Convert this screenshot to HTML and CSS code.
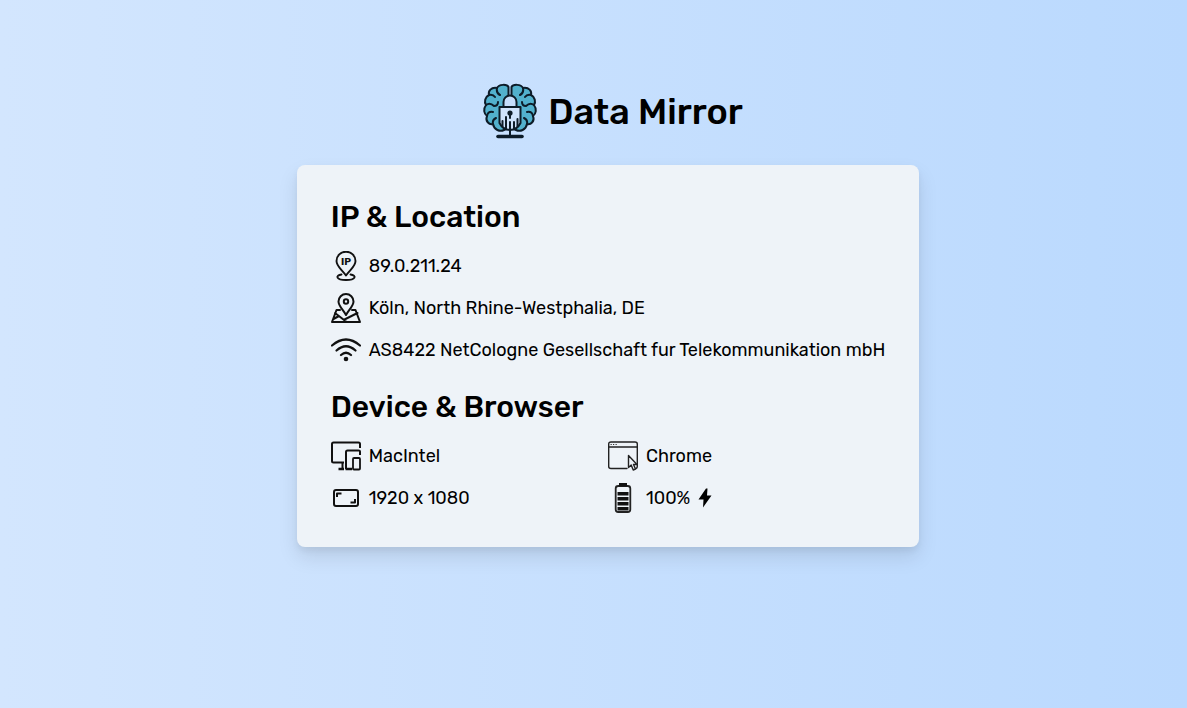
FILE: index.html
```html
<!DOCTYPE html>
<html lang="en">
<head>
<meta charset="utf-8">
<meta name="viewport" content="width=device-width, initial-scale=1">
<title>Data Mirror</title>
<link rel="stylesheet" href="styles.css">
</head>
<body>
<main class="page">
  <header class="brand">
    <svg class="logo" viewBox="0 0 60 60" fill="none" stroke="#0d1c28" stroke-width="2" stroke-linecap="round" stroke-linejoin="round" aria-hidden="true">
      <path fill="#52b1cd" d="M28.500 5C27 2 19 2 17 6C11 5 8 9 9 13C5 15 4 20 6 23C3 27 4 32 7 34C5 39 9 43 13 42C14 48 20 50 24 48L28.500 46Z"/>
      <path fill="#52b1cd" d="M31.500 5C33 2 41 2 43 6C49 5 52 9 51 13C55 15 56 20 54 23C57 27 56 32 53 34C55 39 51 43 47 42C46 48 40 50 36 48L31.500 46Z"/>
      <path d="M17 6q-1 5 3 7M9 13q4-1 6 2M6 23q4-3 8 1q4 0 4-4M7 34q1-5 6-4M13 42q-1-4 3-6M43 6q1 5-3 7M51 13q-4-1-6 2M54 23q-4-3-8 1q-4 0-4-4M53 34q-1-5-6-4M47 42q1-4-3-6"/>
      <path fill="#cfe3fb" d="M19.500 25H40.500V41Q37 48 30 48Q23 48 19.500 41Z"/>
      <path fill="#c6defc" d="M23.500 25V20a6.500 6.500 0 0 1 13 0v5z"/>
      <circle cx="30" cy="31" r="2.600" fill="#0d1c28" stroke="none"/>
      <path d="M30 31v5M22.500 39v5M26 35v12M30 40v13M34 40v7M37.500 37v7"/>
      <path stroke-width="3.600" d="M18 54.500H42"/>
    </svg>
    <h1 class="brand-name">Data Mirror</h1>
  </header>

  <div class="card">
    <section class="group">
      <h2 class="heading">IP &amp; Location</h2>
      <ul class="list">
        <li class="item">
          <svg class="icon" viewBox="0 0 30 30" fill="none" stroke="#111" stroke-width="1.900" stroke-linecap="round" stroke-linejoin="round" aria-hidden="true">
            <path d="M15 24.500C11 18.500 5.500 15.500 5.500 10a9.500 9.300 0 0 1 19 0C24.500 15.500 19 18.500 15 24.500Z"/>
            <path d="M10.500 23.500C4 24.500 5 29 15 29S26 24.500 19.500 23.500"/>
            <text class="pin-text" x="15" y="13.500" text-anchor="middle">IP</text>
          </svg>
          <span>89.0.211.24</span>
        </li>
        <li class="item">
          <svg class="icon" viewBox="0 0 30 30" fill="none" stroke="#111" stroke-width="2" stroke-linecap="round" stroke-linejoin="round" aria-hidden="true">
            <path d="M15 22C12 16.500 7.500 13 7.500 8.500a7.500 7.500 0 0 1 15 0C22.500 13 18 16.500 15 22Z"/>
            <circle cx="15" cy="8.500" r="2.200"/>
            <path d="M9 17H5.500L1 29H29L24.500 17H21M4 20L15 28.500M2.500 26L8 23M13.500 26.500L26.500 20"/>
          </svg>
          <span>Köln, North Rhine-Westphalia, DE</span>
        </li>
        <li class="item">
          <svg class="icon" viewBox="0 0 30 30" fill="none" stroke="#111" stroke-width="2.200" stroke-linecap="round" aria-hidden="true">
            <path d="M1 10.500Q15-1.500 29 10.500M5.500 15.500Q15 7 24.500 15.500M10 20Q15 15.500 20 20"/>
            <circle cx="15" cy="24" r="2.300" fill="#111" stroke="none"/>
          </svg>
          <span>AS8422 NetCologne Gesellschaft fur Telekommunikation mbH</span>
        </li>
      </ul>
    </section>

    <section class="group">
      <h2 class="heading">Device &amp; Browser</h2>
      <ul class="list list-split">
        <li class="item">
          <svg class="icon" viewBox="0 0 30 30" fill="none" stroke="#111" stroke-width="2" stroke-linejoin="round" aria-hidden="true">
            <path d="M29 7V3Q29 1.500 27.500 1.500H2.500Q1 1.500 1 3V20Q1 21.500 2.500 21.500H13M11.500 21.500V28"/>
            <path stroke-width="2.600" d="M7.500 28H13M14.500 28H21"/>
            <path d="M29 14V10.500Q29 9.500 27.500 9.500H16.500Q15 9.500 15 11V28"/>
            <rect x="22" y="17" width="7" height="11.500" rx="1" stroke-width="1.800"/>
          </svg>
          <span>MacIntel</span>
        </li>
        <li class="item">
          <svg class="icon" viewBox="0 0 30 30" fill="none" stroke="#222" stroke-width="1.400" stroke-linecap="round" stroke-linejoin="round" aria-hidden="true">
            <path d="M19 27.500H3Q.700 27.500.700 25.500V3Q.700 1 3 1H27Q29.300 1 29.300 3V25.500Q29.300 27 28 27.500M1 6H29"/>
            <path stroke-width="1" d="M3 3.500h.300M5.500 3.500h.300M8 3.500h.300"/>
            <path fill="#eef3f8" d="M20.500 14.500V26.500L23.200 24L25.200 29L27.500 28L25.500 23.500H29Z"/>
          </svg>
          <span>Chrome</span>
        </li>
        <li class="item">
          <svg class="icon" viewBox="0 0 30 30" fill="none" stroke="#111" stroke-width="2" stroke-linecap="round" stroke-linejoin="round" aria-hidden="true">
            <rect x="3" y="7" width="24" height="16" rx="2"/>
            <path stroke-linecap="butt" d="M6 14V10.500H10.500M24 16V19.500H19.500"/>
          </svg>
          <span>1920 x 1080</span>
        </li>
        <li class="item">
          <svg class="icon" viewBox="0 0 30 30" fill="none" stroke="#222" stroke-width="1.800" aria-hidden="true">
            <rect x="7.700" y="3" width="14.600" height="26" rx="2.500"/>
            <path fill="#111" stroke="none" d="M11 0H19V3.500H11ZM9.500 9H20.500V12.500H9.500ZM9.500 14H20.500V17.500H9.500ZM9.500 19H20.500V22.500H9.500ZM9.500 24H20.500V27.500H9.500Z"/>
          </svg>
          <span>100%</span>
          <svg class="bolt" viewBox="0 0 14 20" fill="#000" role="img" aria-label="Charging"><path d="M8 0.500L0.500 11.500H5.500L5 19.500L13.500 7.500H9L9.500 0.500Z"/></svg>
        </li>
      </ul>
    </section>
  </div>
</main>
</body>
</html>
```
FILE: styles.css
```css
* {
  box-sizing: border-box;
}

body {
  margin: 0;
  min-height: 100vh;
  background: linear-gradient(to right, #d3e6fe, #bad9fe);
  color: #000;
  font-family: Rubik, Roboto, sans-serif;
  font-size: 18px;
  line-height: 30px;
}

.page {
  display: flex;
  flex-direction: column;
  align-items: center;
  gap: 23px;
  padding: 82px 0 32px 29px;
}

.brand {
  display: flex;
  align-items: center;
  gap: 8px;
  padding-left: 7px;
}

.logo {
  width: 60px;
  height: 60px;
}

.brand-name {
  margin: 0;
  font-size: 36px;
  font-weight: 500;
  line-height: 48px;
}

.card {
  display: flex;
  flex-direction: column;
  gap: 24px;
  max-width: 100%;
  padding: 34px;
  border-radius: 8px;
  background: #eef3f8;
  box-shadow: 0 10px 20px rgba(0, 0, 0, 0.1), 0 4px 6px rgba(0, 0, 0, 0.05);
}

.group {
  display: flex;
  flex-direction: column;
  gap: 16px;
}

.heading {
  margin: 0;
  font-size: 30px;
  font-weight: 500;
  line-height: 36px;
}

.list {
  display: grid;
  gap: 12px 0;
  margin: 0;
  padding: 0;
  list-style: none;
}

.list-split {
  grid-template-columns: 1fr 1fr;
}

.item {
  display: flex;
  align-items: center;
  gap: 8px;
}

.icon {
  flex: none;
  width: 30px;
  height: 30px;
}

.pin-text {
  fill: #111;
  stroke: none;
  font-size: 10px;
  font-weight: 700;
}

.bolt {
  width: 14px;
  height: 20px;
}
```
